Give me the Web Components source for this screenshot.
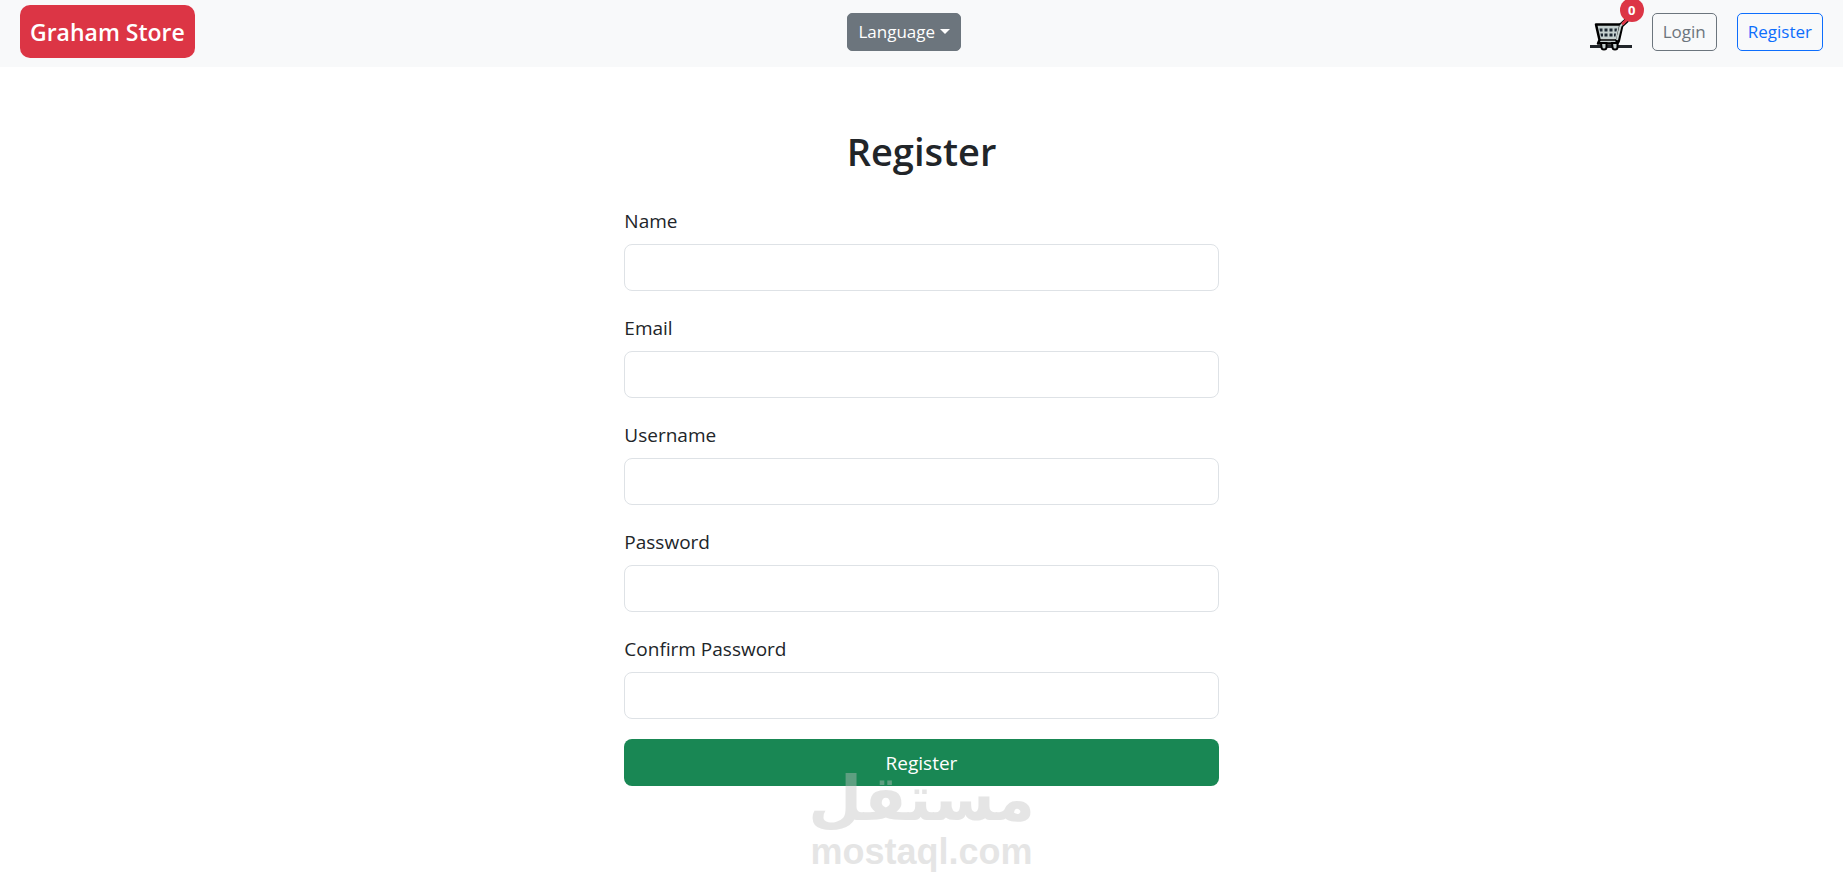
<!DOCTYPE html>
<html lang="en">
<head>
<meta charset="utf-8">
<meta name="viewport" content="width=device-width, initial-scale=1">
<title>Register - Graham Store</title>
<style>
  body { margin: 0; background: #fff; color: #212529; font: 19px/30px "Segoe UI", "Open Sans", "Noto Sans", sans-serif; }
</style>
</head>
<body>
<store-page></store-page>
<script>
const define = (name, html, setup) => customElements.define(name, class extends HTMLElement {
  connectedCallback() {
    if (this.shadowRoot) return;
    const t = document.createElement('template');
    t.innerHTML = html;
    this.attachShadow({ mode: 'open' }).append(t.content.cloneNode(true));
    if (setup) setup(this, this.shadowRoot);
  }
});

define('nav-button', `
<style>
  :host { display: block; --tone: #6c757d; }
  :host([tone="primary"]) { --tone: #0d6efd; }
  button { display: flex; align-items: center; gap: 5px; box-sizing: border-box; margin: 0; padding: 5px 10px; border: 1px solid var(--tone); border-radius: 5px; background: transparent; color: var(--tone); font: inherit; font-size: 17px; line-height: 26px; cursor: pointer; }
  :host([filled]) button { background: var(--tone); color: #fff; }
  i { display: none; border: 5px solid transparent; border-top-color: currentColor; border-bottom: 0; }
  :host([menu]) i { display: block; }
</style>
<button type="button"><slot></slot><i></i></button>`);

define('cart-link', `
<style>
  :host { display: block; position: relative; }
  a { display: block; color: #212529; }
  svg { display: block; }
  .count { position: absolute; top: -15px; right: -12px; box-sizing: border-box; min-width: 24px; height: 24px; border-radius: 12px; background: #dc3545; color: #fff; font-size: 13px; font-weight: 700; line-height: 24px; text-align: center; }
</style>
<a href="#cart" aria-label="Cart">
<svg width="42" height="38" viewBox="0 0 42 38" aria-hidden="true">
  <path d="M0 32h42v3H0z" fill="#212529"/>
  <path d="M27.500 28L31 12.500L36.500 7.500" fill="none" stroke="#000" stroke-width="5" stroke-linecap="round" stroke-linejoin="round"/>
  <path d="M6 11.500h24.500L27.500 26l-1 1.500 1 3H8l1.500-3.500z" fill="#c5d0cf" stroke="#000" stroke-width="2.500" stroke-linejoin="round"/>
  <path d="M9.500 27H26.500" stroke="#000" stroke-width="1.500"/>
  <path d="M27 27l3.500-14L35 8.500" fill="none" stroke="#c5d0cf" stroke-width="2"/>
  <path d="M33 10.500L36 7.500" stroke="#dc3545" stroke-width="3" stroke-linecap="round"/>
  <g fill="#1d2833">
    <path d="M9.500 15.500h3v3H10zM14.500 15.500h3v3h-3zM19.500 15.500h3v3h-3zM24.500 15.500h2.500l-.5 3h-2z"/>
    <path d="M10.500 20.500h2.500v3h-2zM14.500 20.500h3v3h-3zM19.500 20.500h3v3h-3zM24 20.500h2l-.5 3H24z"/>
  </g>
  <path d="M11 30h5.500v4a2.500 2.500 0 0 1-5 0zM22 30h5.500v4a2.500 2.500 0 0 1-5 0z" fill="#c5d0cf" stroke="#000" stroke-width="2"/>
</svg>
<span class="count">0</span></a>`);

define('store-nav', `
<style>
  :host { display: block; background: #f8f9fa; }
  nav { display: flex; align-items: center; justify-content: space-between; box-sizing: border-box; padding: 5px 20px 9px; }
  .brand { padding: 10px 10px 8px; border-radius: 10px; background: #dc3545; color: #fff; font-size: 23px; font-weight: 600; line-height: 35px; text-decoration: none; }
  .language { margin-left: 24px; }
  .actions { display: flex; align-items: center; gap: 20px; }
</style>
<nav aria-label="Main">
  <a class="brand" href="#home">Graham Store</a>
  <nav-button class="language" filled menu>Language</nav-button>
  <div class="actions">
    <cart-link></cart-link>
    <nav-button>Login</nav-button>
    <nav-button tone="primary">Register</nav-button>
  </div>
</nav>`);

define('form-field', `
<style>
  :host { display: block; }
  label { display: block; margin-bottom: 8px; padding-top: 2px; }
  input { display: block; box-sizing: border-box; width: 100%; height: 47px; margin: 0; padding: 8px 15px; border: 1px solid #dee2e6; border-radius: 8px; background: #fff; color: inherit; font: inherit; }
</style>
<label for="field"><slot></slot></label>
<input id="field">`, (host, root) => { root.querySelector('input').type = host.getAttribute('type') || 'text'; });

define('register-form', `
<style>
  :host { display: block; }
  h1 { margin: 0 0 28px; font-size: 38px; font-weight: 600; line-height: 50px; text-align: center; }
  form { display: flex; flex-direction: column; gap: 20px; }
  button { height: 47px; margin: 0; padding: 1px 15px 0; border: 0; border-radius: 8px; background: #198754; color: #fff; font: inherit; cursor: pointer; }
</style>
<h1>Register</h1>
<form>
  <form-field>Name</form-field>
  <form-field type="email">Email</form-field>
  <form-field>Username</form-field>
  <form-field type="password">Password</form-field>
  <form-field type="password">Confirm Password</form-field>
  <button type="submit">Register</button>
</form>`);

define('site-watermark', `
<style>
  :host { display: flex; flex-direction: column; align-items: center; color: #c2c2c2; opacity: .41; font-weight: 700; pointer-events: none; white-space: nowrap; }
  .ar { font-family: "DejaVu Sans", sans-serif; font-size: 62px; line-height: 66px; }
  .en { font-family: "Liberation Sans", sans-serif; font-size: 36px; line-height: 40px; }
</style>
<span class="ar" lang="ar" dir="rtl">مستقل</span>
<span class="en">mostaql.com</span>`);

define('store-page', `
<style>
  :host { display: block; position: relative; }
  main { box-sizing: border-box; width: calc(100% / 3 - 20px); min-width: 300px; margin: 0 auto; padding: 59px 0 103px; }
  site-watermark { position: absolute; left: 0; right: 0; bottom: 17px; }
</style>
<store-nav></store-nav>
<main><register-form></register-form></main>
<site-watermark></site-watermark>`);
</script>
</body>
</html>
